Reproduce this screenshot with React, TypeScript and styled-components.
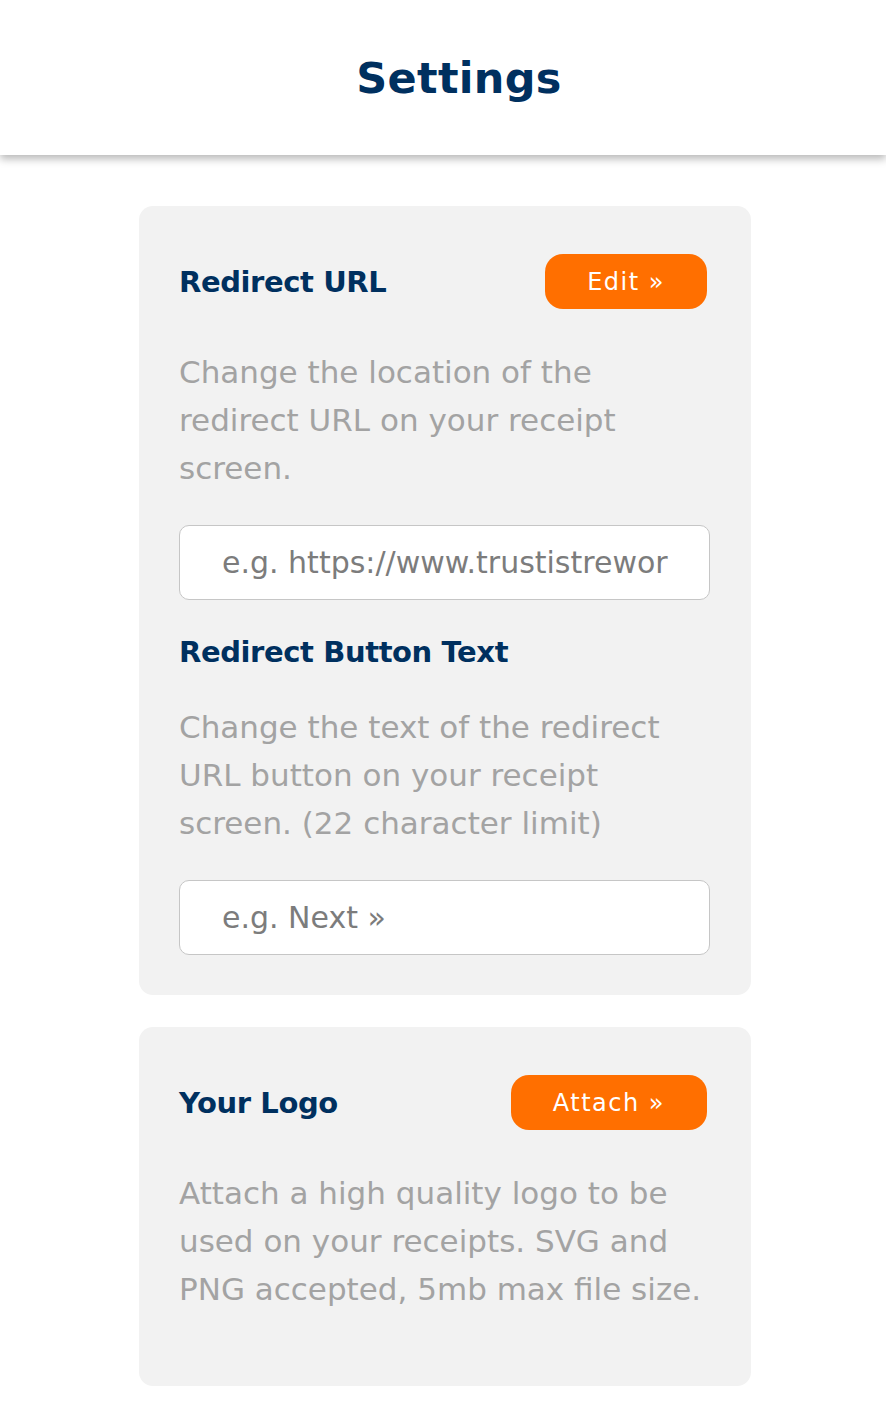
import styled, { createGlobalStyle } from "styled-components";

const GlobalStyle = createGlobalStyle`
  * {
    box-sizing: border-box;
  }
  body {
    margin: 0;
    background: #ffffff;
    font-family: 'DejaVu Sans', 'Open Sans', sans-serif;
  }
`;

const Header = styled.header`
  height: 155px;
  display: flex;
  align-items: center;
  justify-content: center;
  background: #ffffff;
  box-shadow: 0 4px 8px rgba(0, 0, 0, 0.28);
`;

const Title = styled.h1`
  margin: 0 0 0 32px;
  font-size: 43px;
  font-weight: 700;
  color: #00305f;
  letter-spacing: 0.3px;
`;

const Main = styled.main`
  display: flex;
  flex-direction: column;
  align-items: center;
  gap: 32px;
  padding: 51px 0 21px 4px;
`;

const Card = styled.section`
  width: 612px;
  padding: 48px 41px 40px 40px;
  background: #f2f2f2;
  border-radius: 14px;
  display: flex;
  flex-direction: column;
`;

const HeadRow = styled.div`
  display: flex;
  align-items: center;
  justify-content: space-between;
  margin-bottom: 39px;
`;

const Heading = styled.h2<{ $standalone?: boolean }>`
  margin: ${props => props.$standalone ? '32px 0 31px' : '0'};
  font-size: 29px;
  line-height: 40px;
  font-weight: 700;
  color: #00305f;
  letter-spacing: -0.4px;
`;

const Button = styled.button`
  height: 55px;
  margin-right: 3px;
  padding: 0 42px;
  border: none;
  border-radius: 18px;
  background: #ff6f00;
  color: #ffffff;
  font-family: inherit;
  font-size: 24px;
  font-weight: 500;
  letter-spacing: 1.5px;
  cursor: pointer;
`;

const Description = styled.p`
  margin: 0 0 33px;
  font-size: 31px;
  line-height: 48px;
  color: #a3a3a3;
`;

const Input = styled.input`
  width: 100%;
  height: 75px;
  padding: 0 40px 0 42px;
  border: 1px solid #c6c6c6;
  border-radius: 10px;
  background: #ffffff;
  font-family: inherit;
  font-size: 30px;
  color: #555555;
  outline: none;
  &::placeholder {
    color: #7c7c7c;
  }
`;

export default function App() {
  return (
    <>
      <GlobalStyle />
      <Header>
        <Title>Settings</Title>
      </Header>
      <Main>
        <Card>
          <HeadRow>
            <Heading>Redirect URL</Heading>
            <Button>Edit »</Button>
          </HeadRow>
          <Description>
            Change the location of the<br />
            redirect URL on your receipt<br />
            screen.
          </Description>
          <Input placeholder="e.g. https://www.trustistreworld.com" />
          <Heading $standalone>Redirect Button Text</Heading>
          <Description>
            Change the text of the redirect<br />
            URL button on your receipt<br />
            screen. (22 character limit)
          </Description>
          <Input placeholder="e.g. Next »" />
        </Card>
        <Card>
          <HeadRow>
            <Heading>Your Logo</Heading>
            <Button>Attach »</Button>
          </HeadRow>
          <Description>
            Attach a high quality logo to be<br />
            used on your receipts. SVG and<br />
            PNG accepted, 5mb max file size.
          </Description>
        </Card>
      </Main>
    </>
  );
}
